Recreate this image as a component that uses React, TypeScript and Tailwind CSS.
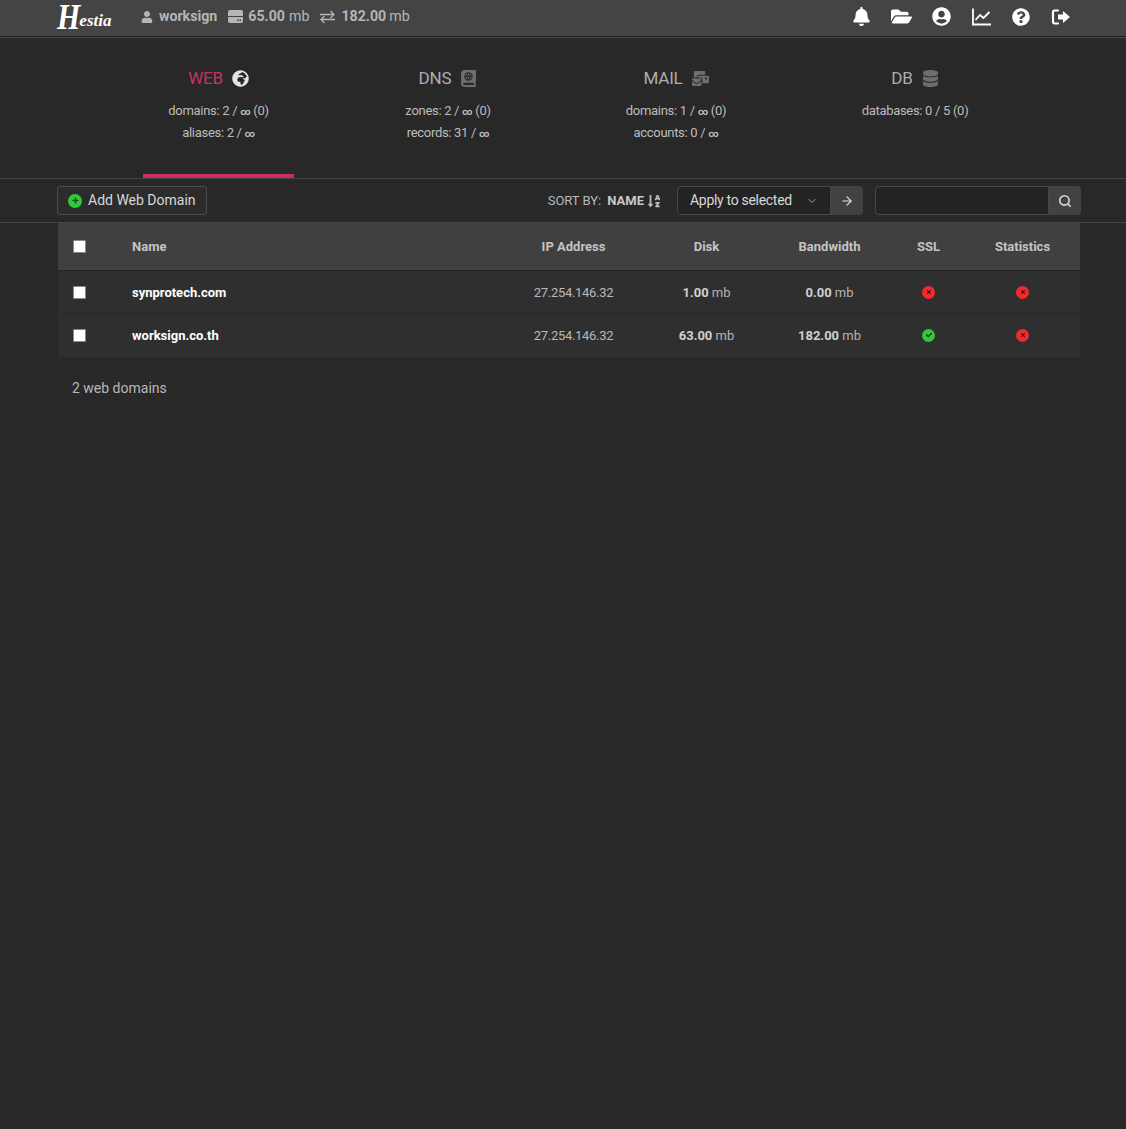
import { ArrowRight, ChevronDown, Search } from 'lucide-react';
import {
  FaAtlas,
  FaBell,
  FaCheck,
  FaDatabase,
  FaFolderOpen,
  FaGlobeAfrica,
  FaMailBulk,
  FaPlus,
  FaQuestionCircle,
  FaSortAlphaDown,
  FaTimes,
  FaUser,
  FaUserCircle,
} from 'react-icons/fa';
import type { ReactNode } from 'react';

const font = { fontFamily: '"Roboto", "Noto Sans", sans-serif' };

const tabs = [
  { title: 'WEB', icon: <FaGlobeAfrica />, width: 'w-[151px]', lines: ['domains: 2 / ∞ (0)', 'aliases: 2 / ∞'], active: true },
  { title: 'DNS', icon: <FaAtlas />, width: 'w-[136px]', lines: ['zones: 2 / ∞ (0)', 'records: 31 / ∞'], active: false },
  { title: 'MAIL', icon: <FaMailBulk />, width: 'w-[148px]', lines: ['domains: 1 / ∞ (0)', 'accounts: 0 / ∞'], active: false },
  { title: 'DB', icon: <FaDatabase />, width: 'w-[158px]', lines: ['databases: 0 / 5 (0)'], active: false },
];

const rows = [
  { name: 'synprotech.com', ip: '27.254.146.32', disk: '1.00', bandwidth: '0.00', ssl: false },
  { name: 'worksign.co.th', ip: '27.254.146.32', disk: '63.00', bandwidth: '182.00', ssl: true },
];

const columns = 'grid grid-cols-[73px_376px_133px_133px_113px_85px_103px] items-center';

function StatusDot({ ok }: { ok: boolean }) {
  return (
    <span
      className={`flex h-[13px] w-[13px] items-center justify-center rounded-full text-[6px] text-[#1d1d1d] ${
        ok ? 'bg-[#2dc937]' : 'bg-[#f4282d]'
      }`}
    >
      {ok ? <FaCheck /> : <FaTimes />}
    </span>
  );
}

function Usage({ value }: { value: string }) {
  return (
    <span className="text-[13px] text-[#b4b4b4]">
      <span className="font-bold text-[#d0d0d0]">{value}</span> mb
    </span>
  );
}

function TopIcon({ children }: { children: ReactNode }) {
  return <span className="flex w-[40px] justify-center text-[19px] text-white">{children}</span>;
}

// the infinity sign is much narrower in the original font
function Limit({ text }: { text: string }) {
  const [before, after] = text.split('∞');
  if (after === undefined) return <span className="h-[20px]">{text}</span>;
  return (
    <span className="h-[20px]">
      {before}
      <span className="text-[10px] font-bold">∞</span>
      {after}
    </span>
  );
}

export default function App() {
  return (
    <div className="min-h-[1129px] bg-[#282828] text-[#c4c4c4]" style={font}>
      {/* top bar */}
      <div className="flex h-[37px] items-center justify-between border-b border-[#1f1f1f] bg-[#444444] pb-[3px] pl-[57px] pr-[45px] shadow-[0_1px_0_#4a4a4a]">
        <div className="flex items-center text-[14.2px] text-[#b5b5b5]">
          <span className="flex h-[30px] w-[84px] translate-y-[2px] items-end text-white" style={{ fontFamily: '"Liberation Serif", serif' }}>
            <span className="inline-block origin-[50%_85%] scale-y-[1.2] text-[30px] font-bold italic leading-[30px]">H</span>
            <span className="-ml-[1px] text-[17px] font-bold italic leading-[26px]">estia</span>
          </span>
          <FaUser className="mr-[6px] text-[12px]" />
          <span className="font-bold">worksign</span>
          <svg className="ml-[11px] mr-[5px]" width="15" height="13" viewBox="0 0 15 13" fill="currentColor">
            <path d="M2 0h11a2 2 0 0 1 2 2v4H0V2a2 2 0 0 1 2-2z" />
            <path fillRule="evenodd" d="M0 7h15v4a2 2 0 0 1-2 2H2a2 2 0 0 1-2-2V7zm9 2.500v1.500h1.500V9.500zm2.500 0v1.500H13V9.500z" />
          </svg>
          <span className="font-bold">65.00</span>
          <span className="ml-[4px]">mb</span>
          <svg className="ml-[11px] mr-[6px]" width="15" height="14" viewBox="0 0 15 14" fill="none" stroke="currentColor" strokeWidth="1.3">
            <path d="M0 4.500h14M10.500 1l3.500 3.500L10.500 8" />
            <path d="M15 9.500H1M4.500 6L1 9.500 4.500 13" />
          </svg>
          <span className="font-bold">182.00</span>
          <span className="ml-[3px]">mb</span>
        </div>
        <div className="flex items-center">
          <TopIcon><FaBell /></TopIcon>
          <TopIcon><FaFolderOpen className="text-[21px]" /></TopIcon>
          <TopIcon><FaUserCircle /></TopIcon>
          <TopIcon>
            <svg width="19" height="18" viewBox="0 0 19 18" fill="none" stroke="currentColor">
              <path d="M1 0.500V16.500H19" strokeWidth="1.800" />
              <path d="M3.500 12L8 7l3.500 3L17.500 4" strokeWidth="1.800" />
            </svg>
          </TopIcon>
          <TopIcon><FaQuestionCircle className="text-[18px]" /></TopIcon>
          <TopIcon>
            <svg width="20" height="18" viewBox="0 0 20 18" fill="none">
              <path d="M7 2.500H3.500A1.500 1.500 0 0 0 2 4v10a1.500 1.500 0 0 0 1.500 1.500H7" stroke="currentColor" strokeWidth="2.200" strokeLinecap="round" />
              <path d="M12 3l7 6-7 6v-3.500H7v-5h5z" fill="currentColor" />
            </svg>
          </TopIcon>
        </div>
      </div>

      {/* tabs */}
      <div className="flex h-[142px] gap-[86px] border-b border-[#444444] pl-[143px]">
        {tabs.map((tab) => (
          <div
            key={tab.title}
            className={`flex h-[141px] flex-col items-center border-b-4 pt-[31px] ${tab.width} ${
              tab.active ? 'border-[#c92f63]' : 'border-transparent'
            }`}
          >
            <div className={`flex h-[22px] items-center gap-[9px] text-[17px] tracking-[-0.2px] ${tab.active ? 'text-[#c9315f]' : 'text-[#aeaeae]'}`}>
              <span>{tab.title}</span>
              <span className={`-mt-[2px] text-[17px] ${tab.active ? 'text-[#e4e4e4]' : 'text-[#6e6e6e]'}`}>{tab.icon}</span>
            </div>
            <div className="mt-[11px] flex flex-col items-center gap-[2px] text-[13px] leading-[20px] tracking-[-0.3px] text-[#bcbcbc]">
              {tab.lines.map((line) => (
                <Limit key={line} text={line} />
              ))}
            </div>
          </div>
        ))}
      </div>

      {/* toolbar */}
      <div className="flex h-[44px] items-center justify-between border-b border-[#444444] pl-[57px] pr-[45px]">
        <button className="flex h-[29px] w-[150px] items-center gap-[6px] rounded-[3px] border border-[#4c4c4c] bg-[#2c2c2c] pl-[10px] text-[14px] text-[#d8d8d8]">
          <span className="flex h-[14px] w-[14px] items-center justify-center rounded-full bg-[#2dc937] text-[7px] text-[#1d3d1f]">
            <FaPlus />
          </span>
          Add Web Domain
        </button>
        <div className="flex items-center">
          <span className="text-[13px] text-[#b8b8b8]">SORT BY:</span>
          <span className="ml-[6px] text-[13px] font-bold text-[#c8c8c8]">NAME</span>
          <FaSortAlphaDown className="ml-[3px] text-[14px] text-[#c0c0c0]" />
          <div className="ml-[16px] flex h-[29px] w-[154px] items-center justify-between rounded-l-[4px] border border-[#484848] bg-[#232323] pl-[12px] pr-[12px] text-[14px] tracking-[-0.3px] text-[#d8d8d8]">
            Apply to selected
            <ChevronDown size={12} className="text-[#a0a0a0]" />
          </div>
          <button className="flex h-[29px] w-[32px] items-center justify-center rounded-r-[4px] bg-[#424242] text-[#e2e2e2]">
            <ArrowRight size={14} />
          </button>
          <div className="ml-[12px] h-[29px] w-[174px] rounded-l-[4px] border border-[#484848] bg-[#232323]" />
          <button className="flex h-[29px] w-[32px] items-center justify-center rounded-r-[4px] bg-[#424242] text-[#d8d8d8]">
            <Search size={14} strokeWidth={2.8} />
          </button>
        </div>
      </div>

      {/* table */}
      <div className="ml-[58px] w-[1022px]">
        <div className={`${columns} h-[48px] border-b border-[#232323] bg-[#404040] text-[13px] font-bold text-[#c4c4c4]`}>
          <span className="flex pl-[15px]">
            <input type="checkbox" className="h-[13px] w-[13px] appearance-none rounded-[1px] border border-[#8a8a8a] bg-white" />
          </span>
          <span className="pl-[1px]">Name</span>
          <span className="text-center">IP Address</span>
          <span className="text-center">Disk</span>
          <span className="text-center">Bandwidth</span>
          <span className="text-center">SSL</span>
          <span className="text-center">Statistics</span>
        </div>
        {rows.map((row, i) => (
          <div key={row.name} className={`${columns} h-[43px] border-b bg-[#2f2f2f] text-[13px] ${i === 0 ? 'border-[#282828]' : 'border-transparent'}`}>
            <span className="flex pl-[15px]">
              <input type="checkbox" className="h-[13px] w-[13px] appearance-none rounded-[1px] border border-[#8a8a8a] bg-white" />
            </span>
            <span className="pl-[1px] pt-[2px] font-bold text-white">{row.name}</span>
            <span className="pt-[2px] text-center tracking-[-0.3px] text-[#b8b8b8]">{row.ip}</span>
            <span className="pt-[2px] text-center"><Usage value={row.disk} /></span>
            <span className="pt-[2px] text-center"><Usage value={row.bandwidth} /></span>
            <span className="flex justify-center"><StatusDot ok={row.ssl} /></span>
            <span className="flex justify-center"><StatusDot ok={false} /></span>
          </div>
        ))}
        <div className="pl-[14px] pt-[21px] text-[14px] leading-[20px] text-[#b8b8b8]">2 web domains</div>
      </div>
    </div>
  );
}
